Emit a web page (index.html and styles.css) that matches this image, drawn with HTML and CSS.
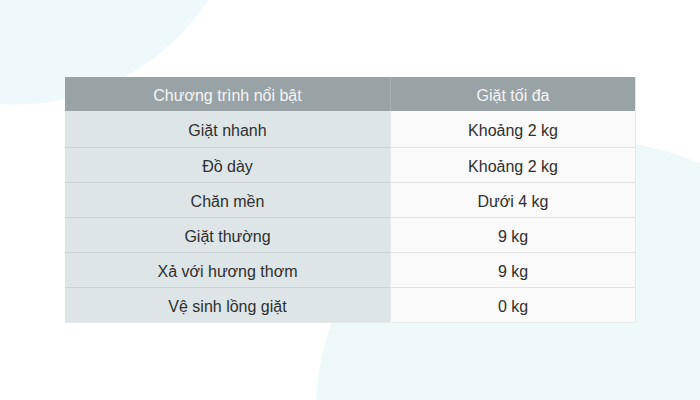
FILE: index.html
```html
<!DOCTYPE html>
<html lang="vi">
<head>
<meta charset="utf-8">
<title>Chương trình nổi bật</title>
<link rel="stylesheet" href="styles.css">
</head>
<body>
<main class="page">
  <table class="spec">
    <thead>
      <tr>
        <th class="col-prog">Chương trình nổi bật</th>
        <th class="col-max">Giặt tối đa</th>
      </tr>
    </thead>
    <tbody>
      <tr class="first"><td class="prog">Giặt nhanh</td><td class="max">Khoảng 2 kg</td></tr>
      <tr><td class="prog">Đồ dày</td><td class="max">Khoảng 2 kg</td></tr>
      <tr><td class="prog">Chăn mền</td><td class="max">Dưới 4 kg</td></tr>
      <tr><td class="prog">Giặt thường</td><td class="max">9 kg</td></tr>
      <tr><td class="prog">Xả với hương thơm</td><td class="max">9 kg</td></tr>
      <tr><td class="prog">Vệ sinh lồng giặt</td><td class="max">0 kg</td></tr>
    </tbody>
  </table>
</main>
</body>
</html>
```

FILE: styles.css
```css
html, body {
  margin: 0;
  padding: 0;
}

body {
  width: 700px;
  height: 400px;
  overflow: hidden;
  font-family: "Liberation Sans", Arial, sans-serif;
  color: #2f2f2f;
  background:
    radial-gradient(circle 231px at 15px -126px, #eff8fa 99.6%, rgba(239,248,250,0) 100%),
    radial-gradient(circle 275px at 590px 415px, #eef8f9 99.6%, rgba(238,248,249,0) 100%),
    #ffffff;
}

.page {
  display: flex;
  padding: 77px 0 0 65px;
}

.spec {
  border-collapse: collapse;
  border-spacing: 0;
  font-size: 16px;
}

.spec th {
  height: 31px;
  padding: 3px 0 0;
  background: #99a2a5;
  color: #f4f6f6;
  font-weight: normal;
  text-align: center;
  vertical-align: middle;
}

.col-prog {
  width: 325px;
}

.col-max {
  width: 244px;
  border-left: 1px solid #a9b1b4;
  border-right: 1px solid #e4e7e8;
}

.spec td {
  height: 31px;
  padding: 3px 0 0;
  text-align: center;
  vertical-align: middle;
  border-top: 1px solid #c9d2d5;
}

.spec tbody tr.first td {
  height: 33px;
  border-top: none;
}

.prog {
  background: #dde5e7;
}

.max {
  background: #fafafa;
  border-left: 1px solid #e6e9ea;
  border-right: 1px solid #e4e7e8;
}

.spec tbody tr + tr td.max {
  border-top-color: #e3e3e3;
}

.spec tbody tr:last-child td {
  border-bottom: 1px solid #e6eaeb;
}
```
